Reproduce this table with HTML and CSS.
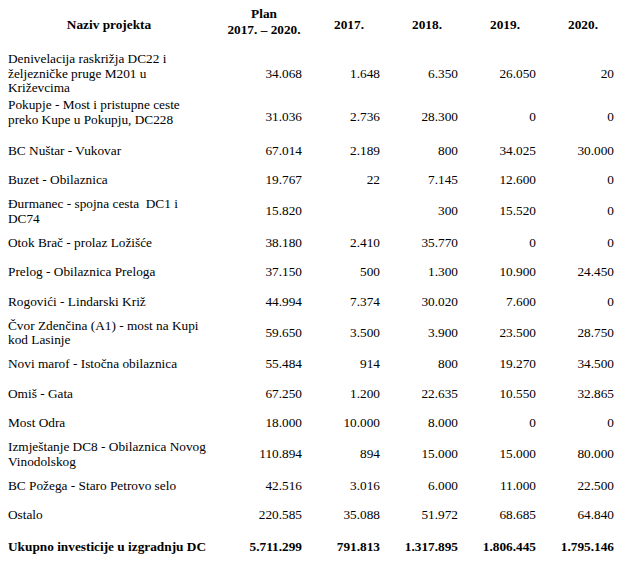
FILE: index.html
```html
<!DOCTYPE html>
<html lang="hr">
<head>
    <meta charset="UTF-8">
    <meta name="viewport" content="width=device-width, initial-scale=1.0">
    <title>Investicije u izgradnju DC</title>
    <link rel="stylesheet" href="styles.css">
</head>
<body>
    <table class="plan-table">
        <colgroup>
            <col class="col-name">
            <col class="col-plan">
            <col class="col-year">
            <col class="col-year">
            <col class="col-year">
            <col class="col-year">
        </colgroup>
        <thead>
            <tr>
                <th>Naziv projekta</th>
                <th class="plan-head">Plan<br>2017. – 2020.</th>
                <th>2017.</th>
                <th>2018.</th>
                <th>2019.</th>
                <th>2020.</th>
            </tr>
        </thead>
        <tbody>
            <tr class="first">
                <td>Denivelacija raskrižja DC22 i<br>željezničke pruge M201 u<br>Križevcima</td>
                <td>34.068</td><td>1.648</td><td>6.350</td><td>26.050</td><td>20</td>
            </tr>
            <tr class="tall">
                <td>Pokupje - Most i pristupne ceste<br>preko Kupe u Pokupju, DC228</td>
                <td>31.036</td><td>2.736</td><td>28.300</td><td>0</td><td>0</td>
            </tr>
            <tr>
                <td>BC Nuštar - Vukovar</td>
                <td>67.014</td><td>2.189</td><td>800</td><td>34.025</td><td>30.000</td>
            </tr>
            <tr>
                <td>Buzet - Obilaznica</td>
                <td>19.767</td><td>22</td><td>7.145</td><td>12.600</td><td>0</td>
            </tr>
            <tr>
                <td>Đurmanec - spojna cesta&nbsp; DC1 i<br>DC74</td>
                <td>15.820</td><td></td><td>300</td><td>15.520</td><td>0</td>
            </tr>
            <tr>
                <td>Otok Brač - prolaz Ložišće</td>
                <td>38.180</td><td>2.410</td><td>35.770</td><td>0</td><td>0</td>
            </tr>
            <tr>
                <td>Prelog - Obilaznica Preloga</td>
                <td>37.150</td><td>500</td><td>1.300</td><td>10.900</td><td>24.450</td>
            </tr>
            <tr>
                <td>Rogovići - Lindarski Križ</td>
                <td>44.994</td><td>7.374</td><td>30.020</td><td>7.600</td><td>0</td>
            </tr>
            <tr>
                <td>Čvor Zdenčina (A1) - most na Kupi<br>kod Lasinje</td>
                <td>59.650</td><td>3.500</td><td>3.900</td><td>23.500</td><td>28.750</td>
            </tr>
            <tr>
                <td>Novi marof - Istočna obilaznica</td>
                <td>55.484</td><td>914</td><td>800</td><td>19.270</td><td>34.500</td>
            </tr>
            <tr>
                <td>Omiš - Gata</td>
                <td>67.250</td><td>1.200</td><td>22.635</td><td>10.550</td><td>32.865</td>
            </tr>
            <tr>
                <td>Most Odra</td>
                <td>18.000</td><td>10.000</td><td>8.000</td><td>0</td><td>0</td>
            </tr>
            <tr>
                <td>Izmještanje DC8 - Obilaznica Novog<br>Vinodolskog</td>
                <td>110.894</td><td>894</td><td>15.000</td><td>15.000</td><td>80.000</td>
            </tr>
            <tr>
                <td>BC Požega - Staro Petrovo selo</td>
                <td>42.516</td><td>3.016</td><td>6.000</td><td>11.000</td><td>22.500</td>
            </tr>
            <tr>
                <td>Ostalo</td>
                <td>220.585</td><td>35.088</td><td>51.972</td><td>68.685</td><td>64.840</td>
            </tr>
            <tr class="total">
                <td>Ukupno investicije u izgradnju DC</td>
                <td>5.711.299</td><td>791.813</td><td>1.317.895</td><td>1.806.445</td><td>1.795.146</td>
            </tr>
        </tbody>
    </table>
</body>
</html>
```

FILE: styles.css
```css
body {
    margin: 0;
    padding: 0;
    background: #fff;
    color: #000;
    font-family: "Liberation Serif", "Times New Roman", serif;
    font-size: 13.3px;
    line-height: 14.5px;
}

.plan-table {
    width: 622px;
    table-layout: fixed;
    border-collapse: collapse;
}

.col-name {
    width: 218px;
}

.col-plan {
    width: 92px;
}

.col-year {
    width: 78px;
}

.plan-table th {
    height: 50px;
    padding: 0 8px;
    font-weight: bold;
    text-align: center;
    vertical-align: middle;
}

.plan-table th.plan-head {
    height: 44px;
    padding-bottom: 6px;
    line-height: 16px;
}

.plan-table td {
    padding: 2px 8px;
    text-align: right;
    vertical-align: middle;
    white-space: nowrap;
}

.plan-table td:first-child {
    text-align: left;
}

.plan-table tbody tr {
    height: 29.5px;
}

.plan-table tr.first {
    height: 48px;
}

.plan-table tr.tall {
    height: 38px;
}

.plan-table tr.tall td:first-child {
    padding-top: 0;
    vertical-align: top;
}

.plan-table tr.total {
    height: 35px;
    font-weight: bold;
}
```
